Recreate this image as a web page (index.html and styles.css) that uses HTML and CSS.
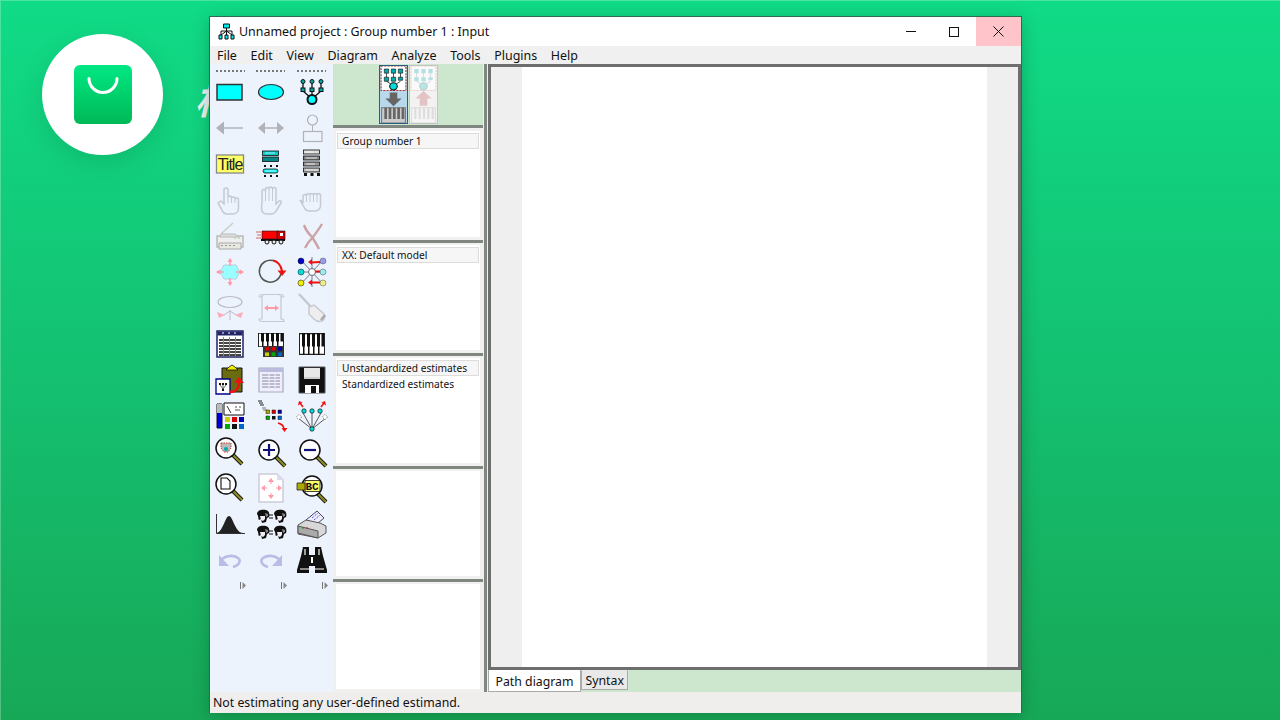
FILE: index.html
```html
<!DOCTYPE html>
<html lang="en">
<head>
<meta charset="utf-8">
<title>Unnamed project</title>
<link rel="stylesheet" href="styles.css">
</head>
<body>
<svg class="defs" aria-hidden="true">
  <symbol id="hand" viewBox="0 0 32 32"><path d="M4 19l3-2 3 3V6a2 2 0 0 1 4 0v7a2 2 0 0 1 3.500 0v1a2 2 0 0 1 3.500 0v1a2 2 0 0 1 3.500 0v9c0 4-3 6-6 6h-5c-3 0-5-2-6-5z" fill="none" stroke="#c4c9d2" stroke-width="1.500"/><path d="M14 13v6M17.500 14v5M21 15v4" stroke="#c4c9d2" fill="none"/></symbol>
  <symbol id="open" viewBox="0 0 32 32"><path d="M7 18V7a1.800 1.800 0 0 1 3.500 0V5a1.800 1.800 0 0 1 3.500 0v-.5a1.800 1.800 0 0 1 3.500 0V5a1.800 1.800 0 0 1 3.500 0v15l3-3c2-1 3 1 2 2l-5 8c-1 2-3 3-5 3h-4c-4 0-5.500-3-5.500-6z" fill="none" stroke="#c4c9d2" stroke-width="1.500"/><path d="M10.500 7v10M14 5v12M17.500 5v12" stroke="#c4c9d2" fill="none"/></symbol>
  <symbol id="fist" viewBox="0 0 32 32"><path d="M4 16l3 2v-6a1.800 1.800 0 0 1 3.500 0v-1a1.800 1.800 0 0 1 3.500 0 1.800 1.800 0 0 1 3.500 0 1.800 1.800 0 0 1 3.500 0 1.800 1.800 0 0 1 3.500 0v11c0 3-3 5-6 5h-5c-3 0-5-2-6-5z" fill="none" stroke="#c4c9d2" stroke-width="1.500"/><path d="M10.500 12v6M14 11v7M17.500 11v7M21 11v7" stroke="#c4c9d2" fill="none"/></symbol>
  <symbol id="piano" viewBox="0 0 26 18"><rect width="26" height="18" fill="#fff"/><path d="M0 0h26v18H0z" fill="none" stroke="#222" stroke-width="2"/><path d="M3 0h3v11H3zM8 0h3v11H8zM13 0h3v11h-3zM18 0h3v11h-3zM22.500 0H25v11h-2.500zM4 11h1.500v7H4zM9 11h1.500v7H9zM14 11h1.500v7H14zM19 11h1.500v7H19z" fill="#111"/></symbol>
  <symbol id="tiles" viewBox="0 0 21 12"><path d="M0 0h21v12H0z" fill="#333"/><path d="M2 1h4v4H2z" fill="#d00"/><path d="M8.500 1h4v4h-4z" fill="#d00"/><path d="M15 1h4v4h-4z" fill="#00a"/><path d="M2 7h4v4H2z" fill="#cc0"/><path d="M8.500 7h4v4h-4z" fill="#0a0"/><path d="M15 7h4v4h-4z" fill="#06c"/></symbol>
  <symbol id="face" viewBox="0 0 14 14"><path d="M1 5C1 1 6 0 10 1c3 1 4 4 3 7l-2 1-1 4-4 1-1-4-2 1c-1-1 0-3-2-6z" fill="#111"/><path d="M4 7h5v3L7 12 5 11z" fill="#eee"/><path d="M9 4l3 1v2l-2 1z" fill="#888"/></symbol>
  <symbol id="mag" viewBox="0 0 32 32"><path d="M21 21l9 9" stroke="#111" stroke-width="4"/><path d="M21 21l9 9" stroke="#8a8a20" stroke-width="2.400"/><circle cx="14" cy="14" r="10" fill="#fff" stroke="#111" stroke-width="1.500"/></symbol>
</svg>

<div class="logo">
  <div class="logo-bag">
    <svg class="logo-smile" viewBox="0 0 32 18"><path d="M2 2a14 14 0 0 0 28 0" fill="none" stroke="#fff" stroke-width="3" stroke-linecap="round"/></svg>
  </div>
</div>
<span class="hidden-title">析</span>

<div class="window">
  <header class="titlebar">
    <svg class="app-icon" viewBox="0 0 17 17">
      <path d="M5.500 1h6v4h-6z" fill="#0ee" stroke="#111"/>
      <path d="M8.500 5v8M3 8h11M3 8v4M14 8v4M8.500 8L3 12M8.500 8L14 12" stroke="#111" fill="none"/>
      <path d="M1 12h3v4H1zM7 12h3v4H7zM13 12h3v4h-3z" fill="#0ee" stroke="#111"/>
    </svg>
    <span class="title-text">Unnamed project : Group number 1 : Input</span>
    <div class="winbtns">
      <div class="winbtn"><span class="glyph-min"></span></div>
      <div class="winbtn"><span class="glyph-max"></span></div>
      <div class="winbtn winbtn-close">
        <svg class="glyph-x" viewBox="0 0 11 11"><path d="M.500.500l10 10M10.500.500l-10 10" stroke="#111" fill="none"/></svg>
      </div>
    </div>
  </header>

  <nav class="menubar">
    <span>File</span><span>Edit</span><span>View</span><span>Diagram</span><span>Analyze</span><span>Tools</span><span>Plugins</span><span>Help</span>
  </nav>

  <div class="body">
    <aside class="toolbar">
      <div class="dots"></div><div class="dots"></div><div class="dots"></div>

      <div class="tool"><svg viewBox="0 0 32 32"><rect x="3" y="8.500" width="25" height="15.500" fill="#0ff" stroke="#333" stroke-width="1.500"/></svg></div>
      <div class="tool"><svg viewBox="0 0 32 32"><ellipse cx="16" cy="16" rx="12.500" ry="7.500" fill="#0ff" stroke="#333" stroke-width="1.200"/></svg></div>
      <div class="tool"><svg viewBox="0 0 32 32"><path d="M7 6v9l9 8M16 6v17M25 6v9l-9 8" stroke="#111" fill="none" stroke-width="1.300"/><g fill="#0aa" stroke="#111"><circle cx="7" cy="5.500" r="2"/><circle cx="16" cy="5.500" r="2"/><circle cx="25" cy="5.500" r="2"/><rect x="5" y="12" width="4" height="3.500"/><rect x="14" y="12" width="4" height="3.500"/><rect x="23" y="12" width="4" height="3.500"/></g><circle cx="16" cy="23.500" r="4.500" fill="#0ff" stroke="#111" stroke-width="2"/></svg></div>

      <div class="tool"><svg viewBox="0 0 32 32"><path d="M2 16l8-6.500v5.800h19v1.400H10v5.800z" fill="#b0b2b8"/></svg></div>
      <div class="tool"><svg viewBox="0 0 32 32"><path d="M3 16l7-6v5.200h12V10l7 6-7 6v-5.200H10V22z" fill="#b0b2b8"/></svg></div>
      <div class="tool"><svg viewBox="0 0 32 32"><circle cx="16.500" cy="8" r="5" fill="none" stroke="#b0b2b8" stroke-width="1.200"/><path d="M16.500 13v6" stroke="#b0b2b8"/><rect x="7.500" y="19.500" width="18.500" height="10" fill="none" stroke="#b0b2b8" stroke-width="1.200"/></svg></div>

      <div class="tool"><svg viewBox="0 0 32 32"><rect x="2.500" y="7" width="27" height="18" fill="#ff6" stroke="#888" stroke-width="1.300"/><text class="title-glyph" x="16" y="22" text-anchor="middle">Title</text></svg></div>
      <div class="tool"><svg viewBox="0 0 32 32"><g stroke="#111" stroke-width=".8"><rect x="7.500" y="3" width="16" height="4.500" fill="#0cc"/><rect x="7.500" y="9" width="16" height="4.500" fill="#088"/><rect x="8" y="21" width="15" height="4" rx="2" fill="#0ee"/></g><path d="M9 17h2v2H9zM15 17h2v2h-2zM21 17h2v2h-2zM9 27h2v2H9zM15 27h2v2h-2zM21 27h2v2h-2z" fill="#111"/><path d="M10 5h10M10 23h11" stroke="#fff" stroke-width=".7"/></svg></div>
      <div class="tool"><svg viewBox="0 0 32 32"><g stroke="#111" stroke-width=".8"><rect x="7.500" y="2" width="16" height="4" fill="#ddd"/><rect x="7.500" y="8" width="16" height="4" fill="#888"/><rect x="7.500" y="14" width="16" height="4" fill="#999"/><rect x="7.500" y="20" width="16" height="4" fill="#bbb"/></g><path d="M9 4h8M10 10h11M10 16h9M10 22h12" stroke="#fff" stroke-width=".8"/><path d="M8 25h3v3H8zM14.500 25h3v3h-3zM21 25h3v3h-3z" fill="#111"/></svg></div>

      <div class="tool"><svg viewBox="0 0 32 32"><use href="#hand"/></svg></div>
      <div class="tool"><svg viewBox="0 0 32 32"><use href="#open"/></svg></div>
      <div class="tool"><svg viewBox="0 0 32 32"><use href="#fist"/></svg></div>

      <div class="tool"><svg viewBox="0 0 32 32"><path d="M7 14L19 3" stroke="#ccc" stroke-width="1.500"/><path d="M3 16h26v11H3z" fill="#eee" stroke="#bbb" stroke-width="1.500"/><path d="M7 14h14l4 3H6z" fill="#ddd" stroke="#bbb"/><path d="M5 23h22v6H5z" fill="#e8e8e0" stroke="#aaa"/><path d="M7 25.500h2M11 25.500h2M15 25.500h2M19 25.500h2" stroke="#999"/><path d="M20 18h2M24 18h2" stroke="#9c9"/></svg></div>
      <div class="tool"><svg viewBox="0 0 32 32"><path d="M7 11h16v8H7z" fill="#f00" stroke="#111" stroke-width=".6"/><path d="M22 11h8v9H22z" fill="#c00" stroke="#111" stroke-width=".6"/><path d="M25 13h3v3h-3z" fill="#fff"/><path d="M1 12h5M2 15h4M1 18h5" stroke="#c66"/><path d="M6 19h24v2H6z" fill="#111"/><circle cx="12" cy="22" r="2" fill="#eee" stroke="#111"/><circle cx="19" cy="22" r="2" fill="#eee" stroke="#111"/><circle cx="26" cy="22" r="2" fill="#eee" stroke="#111"/></svg></div>
      <div class="tool"><svg viewBox="0 0 32 32"><path d="M8 5c2 6 6 10 8 12 2 3 5 8 7 12M26 4c-3 5-6 9-9 13-3 3-6 7-8 11" fill="none" stroke="#cba3a6" stroke-width="2.400"/></svg></div>

      <div class="tool"><svg viewBox="0 0 32 32"><path d="M10 9h12l4 7-4 7H10l-4-7z" fill="#9ff" stroke="#bcd" stroke-width="1"/><path d="M16 3v7M16 22v7M3 16h7M22 16h7" stroke="#f9a" stroke-width="1.500"/><path d="M13.500 6L16 2l2.500 4zM13.500 26L16 30l2.500-4zM6 13.500L2 16l4 2.500zM26 13.500l4 2.500-4 2.500z" fill="#f9a"/></svg></div>
      <div class="tool"><svg viewBox="0 0 32 32"><path d="M18 4.500A11 11 0 1 0 26 18" fill="none" stroke="#555" stroke-width="1.500"/><path d="M18 4.500C22 5 26 9 27 15" fill="none" stroke="#e11" stroke-width="2"/><path d="M22.500 14.500h9L27 20z" fill="#e11"/></svg></div>
      <div class="tool"><svg viewBox="0 0 32 32"><path d="M5 4l22 24M27 4L5 28M5 16h22M16 1v30" stroke="#567" stroke-width=".8"/><path d="M24 6l-9 .500M24 15.500h-9M24 26.500h-9" stroke="#e11" stroke-width="2"/><path d="M12 6l4-3v6zM12 26.500l4-3v6z" fill="#e11"/><circle cx="5" cy="5" r="3" fill="#00c" stroke="#111" stroke-width=".5"/><circle cx="27" cy="5" r="3" fill="#99e" stroke="#555" stroke-width=".5"/><circle cx="5" cy="16" r="3" fill="#0dd" stroke="#111" stroke-width=".5"/><circle cx="27" cy="16" r="3" fill="#9ee" stroke="#555" stroke-width=".5"/><circle cx="5" cy="27" r="3" fill="#ee0" stroke="#111" stroke-width=".5"/><circle cx="27" cy="27" r="3" fill="#ee8" stroke="#555" stroke-width=".5"/><circle cx="16" cy="16" r="3.500" fill="#fff" stroke="#333" stroke-width=".7"/></svg></div>

      <div class="tool"><svg viewBox="0 0 32 32"><ellipse cx="16" cy="10" rx="12" ry="5.500" fill="none" stroke="#bbc" stroke-width="1.200"/><path d="M16 18v10M16 19l-6 4M16 19l6 4" stroke="#bbc" fill="none"/><path d="M3 20l8 3-6 3zM29 20l-8 3 6 3z" fill="#f9a" opacity=".8"/></svg></div>
      <div class="tool"><svg viewBox="0 0 32 32"><path d="M7 5a2.500 2.500 0 0 1 3-2.500h13a2.500 2.500 0 0 1 3 2.500v22a2.500 2.500 0 0 1 3 2.500H7a3 3 0 0 1-3-2.500h3z" fill="none" stroke="#c4c8d0" stroke-width="1.200"/><path d="M7 5H4a2.500 2.500 0 0 1 3-2.500M26 5h3a2.500 2.500 0 0 0-3-2.500" fill="none" stroke="#c4c8d0"/><path d="M11 16h11" stroke="#f9a" stroke-width="2"/><path d="M13 13v6l-4-3zM20 13v6l4-3z" fill="#f9a"/></svg></div>
      <div class="tool"><svg viewBox="0 0 32 32"><path d="M3 2l12 13" stroke="#c4c8d0" stroke-width="2.500"/><path d="M13 15l5-2 10 9c1 2 1 5-2 7-3 1-6 0-8-2l-5-5z" fill="#eee" stroke="#c4c8d0" stroke-width="1.500"/><path d="M25 28l4-5" stroke="#aaa" stroke-width="2.500"/></svg></div>

      <div class="tool"><svg viewBox="0 0 32 32"><path d="M3 3h26v26H3z" fill="#fff" stroke="#226" stroke-width="1.500"/><path d="M3.500 3.500h25v4h-25z" fill="#226"/><path d="M5 12h22M5 15h22M5 18h22M5 21h22M5 24h22M5 27h22" stroke="#444" stroke-width="2"/><path d="M9.500 9v19M15.500 9v19M21.500 9v19" stroke="#888"/><path d="M8 5h2M14 5h2M20 5h2" stroke="#fff"/></svg></div>
      <div class="tool"><svg viewBox="0 0 32 32"><svg x="3" y="5" width="26" height="14" viewBox="0 0 26 18" preserveAspectRatio="none"><use href="#piano" width="26" height="18"/></svg><svg x="8" y="18" width="21" height="11" viewBox="0 0 21 12" preserveAspectRatio="none"><use href="#tiles" width="21" height="12"/></svg></svg></div>
      <div class="tool"><svg viewBox="0 0 32 32"><svg x="3" y="5" width="26" height="22" viewBox="0 0 26 18" preserveAspectRatio="none"><use href="#piano" width="26" height="18"/></svg></svg></div>

      <div class="tool"><svg viewBox="0 0 32 32"><path d="M8 4h20v24H8z" fill="#6b6b10" stroke="#111"/><path d="M12 6h12l-3-3-3-2-3 2z" fill="#ee0" stroke="#111" stroke-width=".8"/><path d="M2 15h14v15H2z" fill="#fff" stroke="#008" stroke-width="1.300"/><path d="M5 19h2v2H5zM8 19h2v2H8zM11 19h2v2h-2zM8 25h2v2H8z" fill="#111"/><path d="M6 21l3 4M9 21v4M12 21l-3 4" stroke="#111" stroke-width=".6"/><path d="M16 28c6 0 9-4 9-9" fill="none" stroke="#e11" stroke-width="2.400"/><path d="M20 19l5-6 5 6z" fill="#e11"/></svg></div>
      <div class="tool"><svg viewBox="0 0 32 32"><path d="M4 4h24v24H4z" fill="#eef" stroke="#aab" stroke-width="1.200"/><path d="M4 4h24v4H4z" fill="#bbd"/><path d="M7 11h18M7 14h18M7 17h18M7 20h18M7 23h18" stroke="#aab" stroke-width="1.300"/><path d="M14 10v15M20 10v15" stroke="#eef"/></svg></div>
      <div class="tool"><svg viewBox="0 0 32 32"><path d="M3 3h26v26H3z" fill="#111" stroke="#555"/><path d="M8 4h16v11H8z" fill="#ccc"/><path d="M8 4h16v9H8z" fill="#e8e8e8"/><path d="M9 21h14v8H9z" fill="#fff"/><path d="M15 22h5v7h-5z" fill="#111"/></svg></div>

      <div class="tool"><svg viewBox="0 0 32 32"><path d="M3 4h5v24H3z" fill="#00d" stroke="#111"/><path d="M3 4h5v9H3z" fill="#bbb"/><path d="M10 3h20v12H10z" fill="#fff" stroke="#111"/><path d="M13 6l4 7" stroke="#333"/><path d="M21 7h2M25 7h2M21 10h5" stroke="#555"/><path d="M11 17h5v5h-5z" fill="#cc0"/><path d="M18 17h5v5h-5z" fill="#d00"/><path d="M25 17h5v5h-5z" fill="#00a"/><path d="M11 24h5v5h-5z" fill="#0a0"/><path d="M18 24h5v5h-5z" fill="#111"/><path d="M25 24h5v5h-5z" fill="#06c"/></svg></div>
      <div class="tool"><svg viewBox="0 0 32 32"><path d="M3 1h4M4 3h4M5 5h4" stroke="#222" stroke-width="1.200"/><path d="M7 8h4M8 10h4" stroke="#777"/><path d="M11 10h3.500v3.500H11z" fill="#aa0" stroke="#111" stroke-width=".5"/><path d="M17 10h3.500v3.500H17z" fill="#d00" stroke="#111" stroke-width=".5"/><path d="M23 10h3.500v3.500H23z" fill="#00a" stroke="#111" stroke-width=".5"/><path d="M11 16h3.500v3.500H11z" fill="#0a0" stroke="#111" stroke-width=".5"/><path d="M17 16h3.500v3.500H17z" fill="#111"/><path d="M23 16h3.500v3.500H23z" fill="#06c" stroke="#111" stroke-width=".5"/><path d="M23 23c3 1 6 2 6 6" stroke="#e11" stroke-width="1.500" fill="none"/><path d="M26.500 28h6L29.500 32z" fill="#e11"/></svg></div>
      <div class="tool"><svg viewBox="0 0 32 32"><path d="M7 13l9 16M16 13v16M25 13l-9 16M2 18l14 11M30 18L16 29" stroke="#333" stroke-width=".8"/><g fill="#0dd" stroke="#111" stroke-width=".7"><circle cx="8" cy="11" r="2.200"/><circle cx="16" cy="11" r="2.200"/><circle cx="24" cy="11" r="2.200"/><circle cx="16" cy="29" r="2.200"/></g><g fill="#fff" stroke="#555" stroke-width=".7" stroke-dasharray="1 1"><circle cx="3" cy="17" r="2.200"/><circle cx="29" cy="17" r="2.200"/></g><path d="M7 7L4 3M25 7l3-4" stroke="#e11" stroke-width="1.500"/><path d="M2 5.500L3 1l3.500 1.500zM30 5.500L29 1l-3.500 1.500z" fill="#e11"/></svg></div>

      <div class="tool"><svg viewBox="0 0 32 32"><use href="#mag" x="-2" y="-2" width="32" height="32"/><path d="M7 7h10v5l-3 4h-4l-3-4z" fill="#bbb" stroke="#c33" stroke-width="1" stroke-dasharray="1.500 1"/><circle cx="12" cy="13" r="2" fill="#0aa"/></svg></div>
      <div class="tool"><svg viewBox="0 0 32 32"><use href="#mag" width="32" height="32"/><path d="M8 14h12M14 8v12" stroke="#117" stroke-width="2.200"/></svg></div>
      <div class="tool"><svg viewBox="0 0 32 32"><use href="#mag" width="32" height="32"/><path d="M8 14h12" stroke="#117" stroke-width="2.200"/></svg></div>

      <div class="tool"><svg viewBox="0 0 32 32"><use href="#mag" x="-2" y="-2" width="32" height="32"/><path d="M7 6h6l3 3v8H7z" fill="#fff" stroke="#111" stroke-width="1.100"/></svg></div>
      <div class="tool"><svg viewBox="0 0 32 32"><path d="M4 2h18l6 6v22H4z" fill="#fff" stroke="#ccd" stroke-width="1.500"/><path d="M22 2v6h6z" fill="#dde"/><path d="M16 6l-3 4h6zM16 27l-3-4h6zM6 16l4-3v6zM27 16l-4-3v6z" fill="#f9a"/><path d="M16 9v3M16 21v3M9 16h3M21 16h3" stroke="#f9a"/></svg></div>
      <div class="tool"><svg viewBox="0 0 32 32"><path d="M21 21l9 9" stroke="#111" stroke-width="4"/><path d="M21 21l9 9" stroke="#8a8a20" stroke-width="2.400"/><circle cx="16" cy="14" r="10" fill="#fff" stroke="#111" stroke-width="1.500"/><path d="M9 8.500h15v11H9z" fill="#ff6" stroke="#111" stroke-width=".8"/><path d="M1 11h8v7H1z" fill="#aa0" stroke="#111" stroke-width=".7"/><text class="bc-glyph" x="16" y="18" text-anchor="middle">BC</text></svg></div>

      <div class="tool"><svg viewBox="0 0 32 32"><path d="M2 25c7 0 9-17 13-17s6 17 14 17z" fill="#222"/><path d="M2.500 6v19.500H31" stroke="#333" fill="none"/></svg></div>
      <div class="tool"><svg viewBox="0 0 32 32"><use href="#face" x="1" y="1" width="14" height="14"/><use href="#face" x="18" y="1" width="14" height="14"/><use href="#face" x="1" y="17" width="14" height="14"/><use href="#face" x="18" y="17" width="14" height="14"/><path d="M14 7h4M14 10h4M14 23h4M14 26h4" stroke="#111"/></svg></div>
      <div class="tool"><svg viewBox="0 0 32 32"><path d="M10 12L21 3l7 7-7 6z" fill="#eef" stroke="#446"/><path d="M16 10l6-5M18 12l6-5" stroke="#33c" stroke-dasharray="1 1"/><path d="M2 17l8-5 14 3 6 3v7l-8 5-20-4z" fill="#d8d8d8" stroke="#555"/><path d="M2 18l20 5v7L2 25z" fill="#aaa" stroke="#555"/><path d="M6 20h2" stroke="#0a0"/><path d="M10 20h2" stroke="#e11"/></svg></div>

      <div class="tool"><svg viewBox="0 0 32 32"><path d="M8 15c5-4 12-4 16-1 3 2 2 7-5 9" fill="none" stroke="#b9bde6" stroke-width="2.600"/><path d="M5 11v11h10z" fill="#b9bde6"/></svg></div>
      <div class="tool"><svg viewBox="0 0 32 32"><path d="M24 15c-5-4-12-4-16-1-3 2-2 7 5 9" fill="none" stroke="#b9bde6" stroke-width="2.600"/><path d="M27 11v11H17z" fill="#b9bde6"/></svg></div>
      <div class="tool"><svg viewBox="0 0 32 32"><path d="M7 3h6v8h6V3h6l2 9 4 14v3H19v-7h-6v7H1v-3l4-14z" fill="#111"/><path d="M9 5v6M23 5v6M4 25h9M19 25h9" stroke="#fff" stroke-width="1.200"/><path d="M15 13h2v6h-2z" fill="#fff"/></svg></div>

      <div class="more"><svg viewBox="0 0 6 7"><path d="M0 0h1v7H0z" fill="#777"/><path d="M2.500 0L6 3.500 2.500 7z" fill="#888"/></svg></div>
      <div class="more"><svg viewBox="0 0 6 7"><path d="M0 0h1v7H0z" fill="#777"/><path d="M2.500 0L6 3.500 2.500 7z" fill="#888"/></svg></div>
      <div class="more"><svg viewBox="0 0 6 7"><path d="M0 0h1v7H0z" fill="#777"/><path d="M2.500 0L6 3.500 2.500 7z" fill="#888"/></svg></div>
    </aside>

    <section class="middle">
      <div class="switcher">
        <div class="switch switch-on">
          <svg viewBox="0 0 25 56" preserveAspectRatio="none">
            <path d="M1 0h23v24H1z" fill="#fff" stroke="#a33" stroke-dasharray="2 1"/>
            <path d="M4 3h4v4H4zM10.500 3h4v4h-4zM17 3h4v4h-4z" fill="#0aa" stroke="#111" stroke-width=".6"/>
            <path d="M4 11h4v4H4zM10.500 11h4v4h-4zM17 11h4v3H17z" fill="#0aa" stroke="#111" stroke-width=".6"/>
            <path d="M6 7v4M12.500 7v4M19 7v4M6 15l6 4M19 15l-6 4" stroke="#111" stroke-width=".7"/>
            <circle cx="12.500" cy="20" r="3.500" fill="#0dd" stroke="#111" stroke-width="1"/>
            <path d="M9 26h7v6h4l-7.500 7.500L5 32h4z" fill="#666"/>
            <rect x="1.500" y="41" width="22" height="15" fill="#ccc" stroke="#777"/>
            <path d="M4 41h2.500v11H4zM8 41h2.500v11H8zM12 41h2.500v11H12zM16 41h2.500v11H16zM20 41h2.500v11H20z" fill="#666"/>
          </svg>
        </div>
        <div class="switch switch-off">
          <svg viewBox="0 0 25 56" preserveAspectRatio="none">
            <path d="M1 0h23v24H1z" fill="#fafafa" stroke="#ecc" stroke-dasharray="2 1"/>
            <path d="M4 3h4v4H4zM10.500 3h4v4h-4zM17 3h4v4h-4zM4 11h4v4H4zM10.500 11h4v4h-4zM17 11h4v3H17z" fill="#b5e0e0"/>
            <path d="M6 7v4M12.500 7v4M19 7v4M6 15l6 4M19 15l-6 4" stroke="#ccd" stroke-width=".7"/>
            <circle cx="12.500" cy="20" r="3.500" fill="#b5e5e5" stroke="#bcc"/>
            <path d="M9 39h7v-7h4l-7.500-7.500L5 32h4z" fill="#e3c3c3"/>
            <rect x="1.500" y="41" width="22" height="15" fill="#f5f5f5" stroke="#ddd"/>
            <path d="M4 41h2v11H4zM8 41h2v11H8zM12 41h2v11h-2zM16 41h2v11h-2zM20 41h2v11h-2z" fill="#ddd"/>
          </svg>
        </div>
      </div>
      <div class="hsplit"></div>
      <div class="panel panel-first"><div class="list"><div class="item item-sel">Group number 1</div></div></div>
      <div class="hsplit"></div>
      <div class="panel"><div class="list"><div class="item item-sel">XX: Default model</div></div></div>
      <div class="hsplit"></div>
      <div class="panel"><div class="list"><div class="item item-sel">Unstandardized estimates</div><div class="item">Standardized estimates</div></div></div>
      <div class="hsplit"></div>
      <div class="panel"><div class="list"></div></div>
      <div class="hsplit"></div>
      <div class="panel panel-last"><div class="list"></div></div>
    </section>

    <div class="vsplit"></div>

    <main class="right">
      <div class="canvas-frame">
        <div class="canvas-page"></div>
      </div>
      <div class="tabs">
        <div class="tab tab-active">Path diagram</div>
        <div class="tab">Syntax</div>
      </div>
    </main>
  </div>

  <footer class="status">Not estimating any user-defined estimand.</footer>
</div>
</body>
</html>
```

FILE: styles.css
```css
* { box-sizing: border-box; }
html, body { margin: 0; height: 100%; }
body {
  position: relative;
  width: 1280px;
  height: 720px;
  overflow: hidden;
  background: linear-gradient(180deg, #10db86 0%, #13c474 45%, #17a857 100%);
  box-shadow: inset 1px 1px 0 rgba(255, 255, 255, .25);
  font-family: "Noto Sans", sans-serif;
  color: #111;
}
.defs { position: absolute; width: 0; height: 0; }

.logo {
  position: absolute;
  left: 42px;
  top: 34px;
  width: 121px;
  height: 121px;
  border-radius: 50%;
  background: #fff;
  box-shadow: 0 8px 24px rgba(0, 90, 50, .18);
  display: flex;
  align-items: center;
  justify-content: center;
}
.logo-bag {
  width: 58px;
  height: 59px;
  border-radius: 6px;
  background: linear-gradient(180deg, #00e884 0%, #00b956 100%);
  display: flex;
  justify-content: center;
  padding-top: 11px;
}
.logo-smile { width: 32px; height: 19px; }
.hidden-title {
  position: absolute;
  left: 195px;
  top: 70px;
  font: italic 700 38px "Noto Sans CJK SC", sans-serif;
  color: #f2f2f2;
}

.window {
  position: absolute;
  left: 209px;
  top: 16px;
  width: 813px;
  height: 697px;
  display: flex;
  flex-direction: column;
  background: #f0f0f0;
  border: 1px solid #2e6a50;
  border-bottom: 0;
  box-shadow: 0 4px 16px rgba(0, 60, 30, .3);
}

.titlebar {
  height: 29px;
  background: #fff;
  display: flex;
  align-items: center;
  padding-left: 8px;
}
.app-icon { width: 17px; height: 17px; flex: none; }
.title-text { margin-left: 4px; font-size: 12.450px; white-space: nowrap; }
.winbtns { margin-left: auto; display: flex; height: 100%; }
.winbtn {
  width: 45px;
  height: 100%;
  display: flex;
  align-items: center;
  justify-content: center;
}
.winbtn:first-child { margin-right: -2px; }
.winbtn-close { background: #ffc4c9; }
.glyph-min { width: 10px; height: 1px; background: #111; }
.glyph-max { width: 10px; height: 10px; border: 1px solid #111; }
.glyph-x { width: 11px; height: 11px; }

.menubar {
  height: 18px;
  padding: 2px 0 0 7px;
  background: #f0f0f0;
  display: flex;
  align-items: center;
  gap: 13.700px;
  font-size: 12.450px;
  line-height: 16px;
}

.body { height: 628px; display: flex; }

.toolbar {
  width: 123px;
  flex: none;
  background: #edf3fc;
  display: grid;
  grid-template-columns: 40px 41px 41px;
  grid-template-rows: 10px repeat(14, 36px) 14px;
  align-content: start;
}
.dots {
  align-self: end;
  justify-self: center;
  width: 29px;
  height: 2px;
  margin-bottom: 2px;
  background: repeating-linear-gradient(90deg, #777 0 2px, transparent 2px 4px);
}
.tool { display: flex; align-items: center; justify-content: center; }
.tool > svg { width: 32px; height: 32px; overflow: visible; }
.title-glyph { font: 16px "Liberation Sans", sans-serif; letter-spacing: -1px; fill: #222; }
.bc-glyph { font: 700 11px "Liberation Mono", monospace; fill: #111; }
.more { display: flex; align-items: center; justify-content: flex-end; padding-right: 4px; }
.more svg { width: 6px; height: 7px; }

.middle {
  width: 151px;
  flex: none;
  display: flex;
  flex-direction: column;
  background: #f0f0f0;
}
.switcher {
  height: 61px;
  margin-right: 1px;
  background: #cde7cf;
  display: flex;
  justify-content: center;
  align-items: center;
  gap: 1px;
}
.switch { width: 29px; height: 59px; }
.switch svg { display: block; width: 100%; height: 100%; }
.switch-on { background: #b8d8ec; border: 1px solid #2a5f85; }
.switch-off { background: #f2f2f2; border: 1px solid #c4c4c4; }
.hsplit { height: 3px; margin-right: 1px; background: #808680; flex: none; }
.panel { height: 110px; padding: 2px 4px 3px 3px; flex: none; }
.panel-first { height: 112px; padding-top: 3px; }
.panel-last { flex: 1; }
.list { height: 100%; background: #fff; padding-top: 2px; }
.item {
  height: 16px;
  padding-left: 5px;
  margin: 0 1px;
  font-size: 10.200px;
  line-height: 17px;
  white-space: nowrap;
}
.item-sel { background: #f6f6f6; border: 1px solid #dcdcdc; padding-left: 4px; line-height: 15px; }

.vsplit {
  width: 4px;
  flex: none;
  background: #f0f0f0;
  border-left: 3px solid #808680;
}

.right {
  flex: 1;
  display: flex;
  flex-direction: column;
  background: #cde7cf;
}
.canvas-frame {
  flex: 1;
  border: 3px solid #6e6e6e;
  background: #efefef;
  display: flex;
  justify-content: center;
}
.canvas-page { width: 465px; background: #fff; }
.tabs { height: 22px; display: flex; align-items: flex-start; font-size: 12.300px; }
.tab {
  height: 20px;
  padding: 0 3.500px;
  background: #e9e9e9;
  border: 1px solid #aaa;
  border-top-color: #e9e9e9;
  line-height: 20px;
}
.tab-active {
  height: 22px;
  padding: 0 6.500px;
  background: #fff;
  border-top: 0;
  line-height: 24px;
}

.status {
  height: 21px;
  background: #f0eded;
  padding-left: 3px;
  font-size: 12.300px;
  line-height: 21px;
}
```
